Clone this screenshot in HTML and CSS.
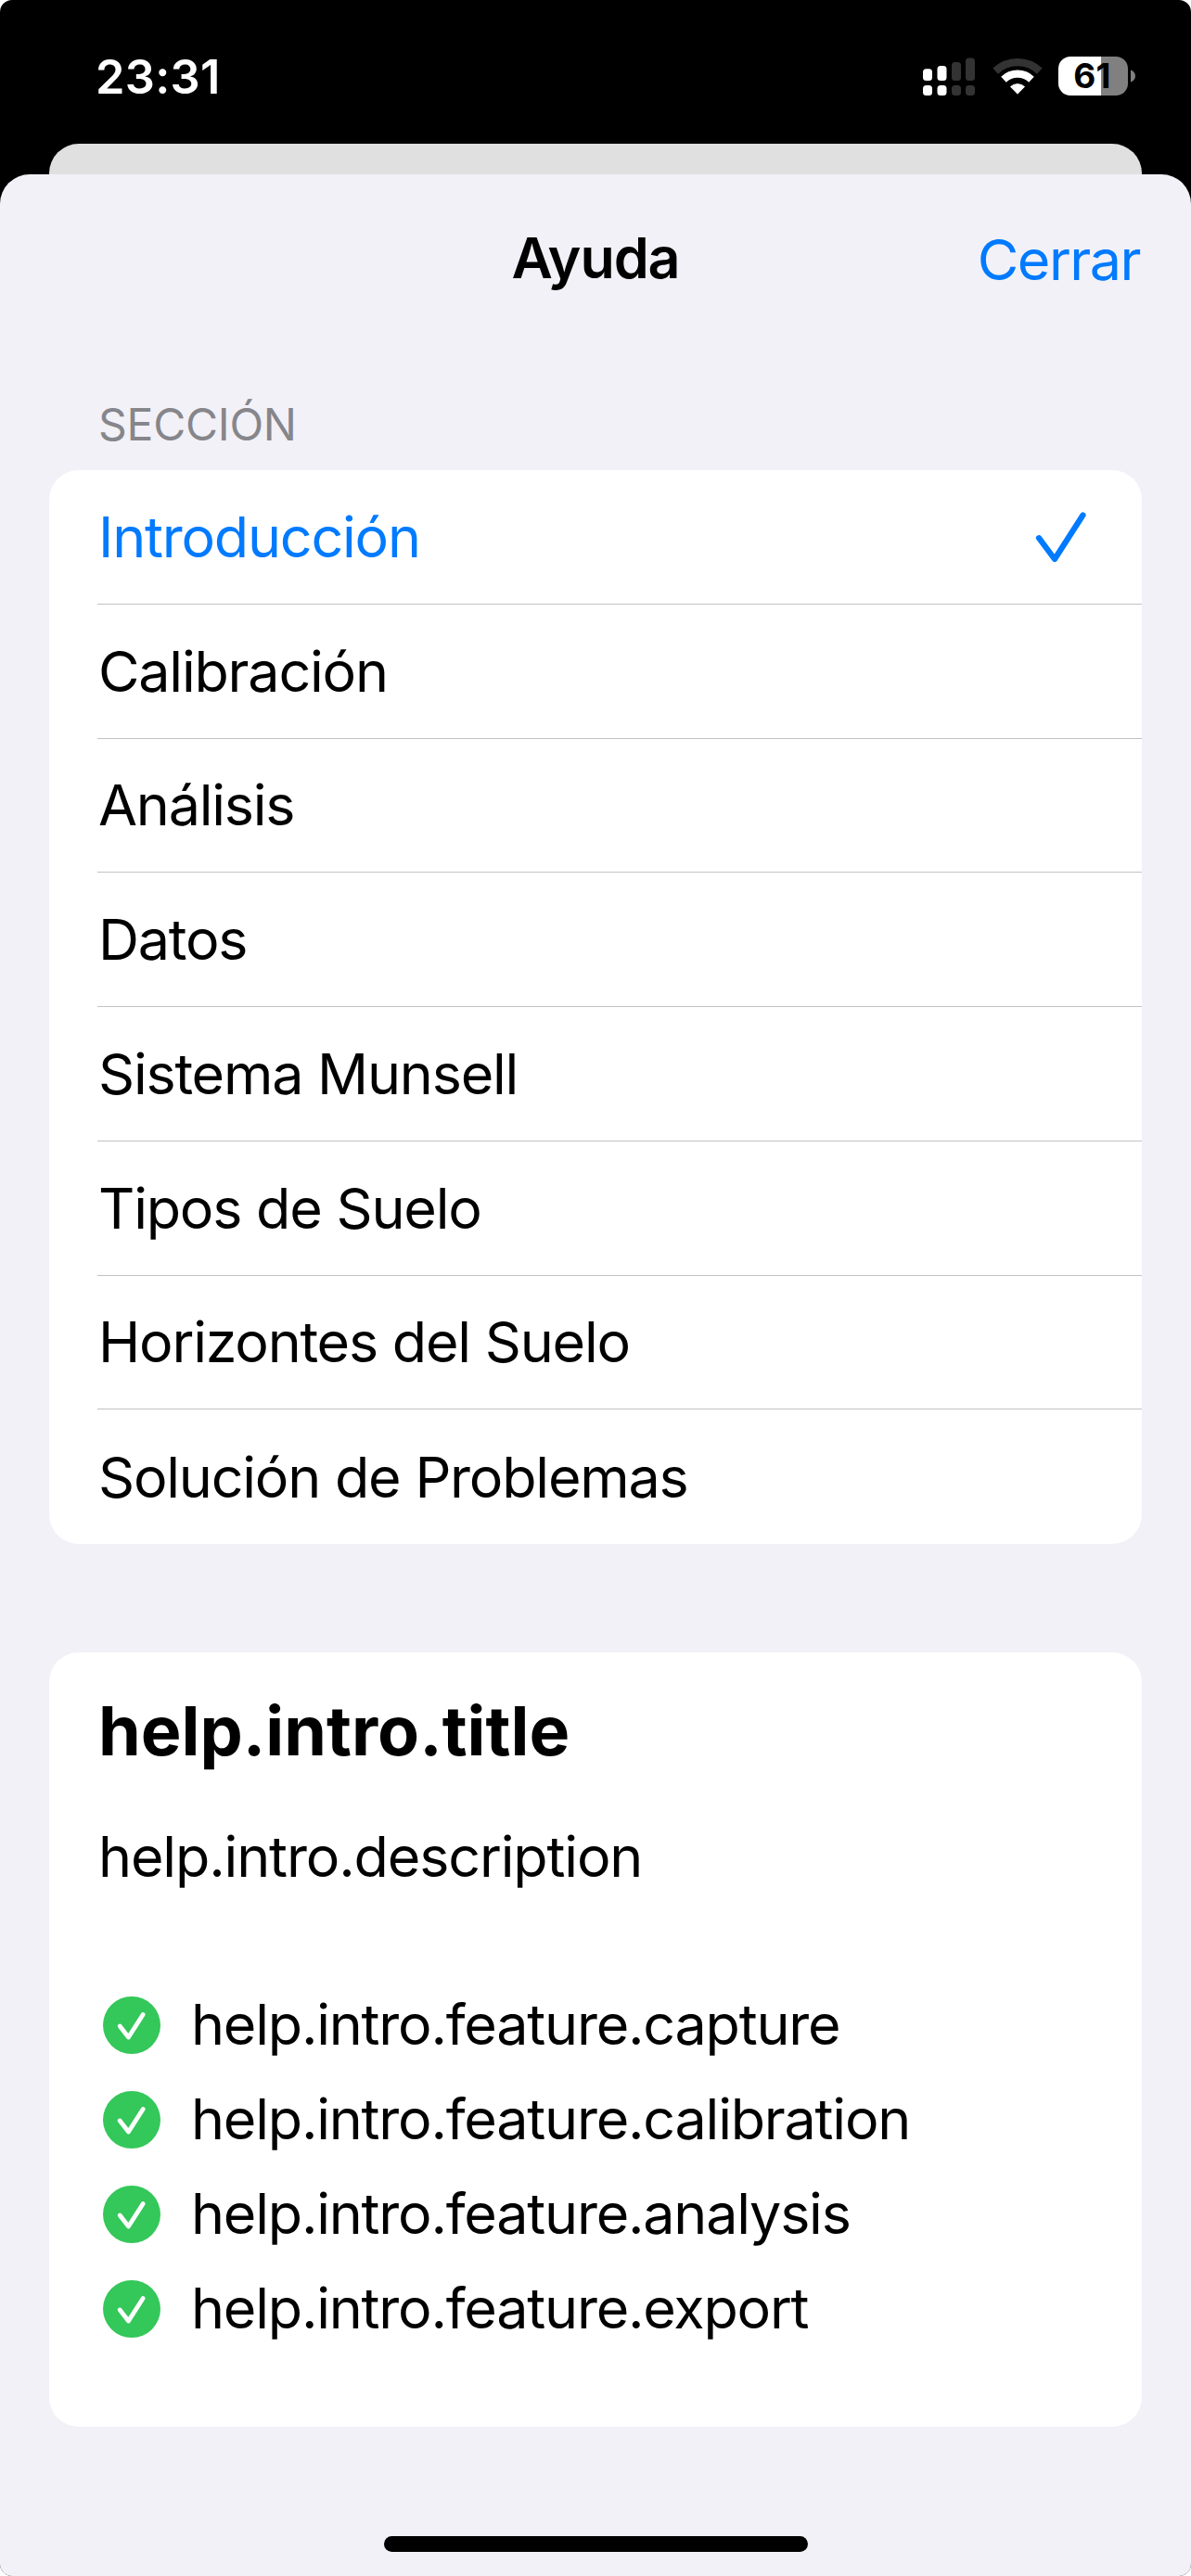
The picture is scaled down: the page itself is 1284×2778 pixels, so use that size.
FILE: index.html
```html
<!DOCTYPE html>
<html lang="es">
<head>
<meta charset="utf-8">
<title>Ayuda</title>
<link rel="stylesheet" href="styles.css">
</head>
<body>
<div class="screen">
  <header class="status">
    <span class="time">23:31</span>
    <div class="indicators">
      <svg class="signal" width="56" height="41" viewBox="0 0 56 41">
        <g fill="#fff">
          <rect x="0" y="12.3" width="10" height="12.7" rx="3.5"/><rect x="0" y="30" width="10" height="11" rx="3.5"/>
          <rect x="15.5" y="9" width="10" height="16" rx="3.5"/><rect x="15.5" y="30" width="10" height="11" rx="3.5"/>
        </g>
        <g fill="#333">
          <rect x="31" y="5" width="10" height="20" rx="3.5"/><rect x="31" y="30" width="10" height="11" rx="3.5"/>
          <rect x="46" y="0.5" width="10" height="24.5" rx="3.5"/><rect x="46" y="30" width="10" height="11" rx="3.5"/>
        </g>
      </svg>
      <svg class="wifi" width="54" height="40" viewBox="0 0 54 40">
        <path d="M3.2 14.6A34.5 34.5 0 0 1 50.8 14.6" fill="none" stroke="#333" stroke-width="8.4"/>
        <path d="M12 23.7A21.8 21.8 0 0 1 42 23.7" fill="none" stroke="#fff" stroke-width="8.2"/>
        <path d="M27 39.3L19.4 31.5A11.4 11.4 0 0 1 34.6 31.5Z" fill="#fff" stroke="#fff" stroke-width=".8" stroke-linejoin="round"/>
      </svg>
      <div class="battery">
        <span class="battery-level">61</span>
        <svg width="5" height="14" viewBox="0 0 5 14"><path d="M0 0.5C3 1.5 5 4 5 7S3 12.5 0 13.5Z" fill="#808080"/></svg>
      </div>
    </div>
  </header>
  <div class="peek"></div>
  <main class="sheet">
    <div class="navbar">
      <h1 class="nav-title">Ayuda</h1>
      <a class="nav-close">Cerrar</a>
    </div>
    <h2 class="section-label">SECCIÓN</h2>
    <ul class="list">
      <li class="row selected"><span>Introducción</span>
        <svg class="check" width="56" height="56" viewBox="0 0 56 56"><path d="M5 29.2L22 52L52.5 4.5" fill="none" stroke="#007aff" stroke-width="6.2" stroke-linecap="round" stroke-linejoin="round"/></svg>
      </li>
      <li class="row">Calibración</li>
      <li class="row">Análisis</li>
      <li class="row">Datos</li>
      <li class="row">Sistema Munsell</li>
      <li class="row">Tipos de Suelo</li>
      <li class="row">Horizontes del Suelo</li>
      <li class="row">Solución de Problemas</li>
    </ul>
    <section class="card">
      <h3 class="card-title">help.intro.title</h3>
      <p class="card-text">help.intro.description</p>
      <ul class="features">
        <li class="feature"><svg width="62" height="62" viewBox="0 0 62 62"><circle cx="31" cy="31" r="31" fill="#34c759"/><path d="M18.2 32L27.5 44L43.2 19.5" class="tick"/></svg>help.intro.feature.capture</li>
        <li class="feature"><svg width="62" height="62" viewBox="0 0 62 62"><circle cx="31" cy="31" r="31" fill="#34c759"/><path d="M18.2 32L27.5 44L43.2 19.5" class="tick"/></svg>help.intro.feature.calibration</li>
        <li class="feature"><svg width="62" height="62" viewBox="0 0 62 62"><circle cx="31" cy="31" r="31" fill="#34c759"/><path d="M18.2 32L27.5 44L43.2 19.5" class="tick"/></svg>help.intro.feature.analysis</li>
        <li class="feature"><svg width="62" height="62" viewBox="0 0 62 62"><circle cx="31" cy="31" r="31" fill="#34c759"/><path d="M18.2 32L27.5 44L43.2 19.5" class="tick"/></svg>help.intro.feature.export</li>
      </ul>
    </section>
    <div class="home"></div>
  </main>
</div>
</body>
</html>
```

FILE: styles.css
```css
* { box-sizing: border-box; margin: 0; padding: 0; }
html { background: #fff; }
body {
  font-family: Inter, "Liberation Sans", sans-serif;
  font-size: 61px;
  letter-spacing: -1.22px;
  color: #000;
}
ul { list-style: none; }
svg { display: block; flex: none; }
.screen {
  width: 1284px;
  height: 2778px;
  background: #000;
  border-radius: 13px;
  overflow: hidden;
  display: flex;
  flex-direction: column;
}
.status {
  height: 155px;
  padding: 9px 60px 0 103px;
  display: flex;
  align-items: center;
  justify-content: space-between;
}
.time { color: #fff; font-size: 50.5px; font-weight: 600; letter-spacing: .3px; }
.indicators { display: flex; align-items: center; }
.wifi { margin-left: 19px; margin-top: -1px; }
.battery { display: flex; align-items: center; gap: 3px; margin-left: 17px; }
.battery-level {
  width: 75px;
  height: 42px;
  padding-right: 2px;
  border-radius: 13px;
  background: linear-gradient(90deg, #fff 45.5px, #808080 45.5px);
  font-size: 37px;
  font-weight: 700;
  letter-spacing: .2px;
  line-height: 42px;
  text-align: center;
}
.peek {
  height: 33px;
  margin: 0 53px;
  background: #e0e0e0;
  border-radius: 32px 32px 0 0;
}
.sheet {
  flex: 1;
  padding: 0 53px;
  background: #f2f1f8;
  border-radius: 32px 32px 0 0;
  display: flex;
  flex-direction: column;
}
.navbar {
  height: 180px;
  display: grid;
  grid-template-columns: 1fr auto 1fr;
  align-items: center;
}
.nav-title { grid-column: 2; font-size: 61px; font-weight: 600; letter-spacing: -1.1px; }
.nav-close {
  grid-column: 3;
  justify-self: end;
  padding: 3px 2px 0 0;
  color: #007aff;
  letter-spacing: -1.5px;
}
.section-label {
  margin: 60px 0 19px 53px;
  font-size: 48px;
  font-weight: 400;
  line-height: 60px;
  letter-spacing: -.25px;
  color: #86868b;
}
.list { background: #fff; border-radius: 32px; }
.row {
  height: 144.75px;
  margin-left: 52px;
  padding: 0 60px 0 1px;
  border-bottom: 1px solid #c2c2c4;
  display: flex;
  align-items: center;
  justify-content: space-between;
}
.row:last-child { border-bottom: 0; }
.selected { color: #007aff; }
.card {
  height: 835px;
  margin-top: 117px;
  padding: 40px 53px 0;
  background: #fff;
  border-radius: 32px;
}
.card-title { font-size: 73.5px; line-height: 90px; letter-spacing: 0; }
.card-text { margin-top: 55px; line-height: 70px; letter-spacing: -1.15px; }
.features { margin-top: 95px; }
.feature {
  height: 102px;
  padding-left: 5px;
  display: flex;
  align-items: center;
  gap: 33px;
}
.feature svg { margin-top: 2px; }
.tick {
  fill: none;
  stroke: #fff;
  stroke-width: 4.8;
  stroke-linecap: round;
  stroke-linejoin: round;
}
.home {
  width: 457px;
  height: 17px;
  margin: 118px auto 0;
  border-radius: 9px;
  background: #000;
}
```
